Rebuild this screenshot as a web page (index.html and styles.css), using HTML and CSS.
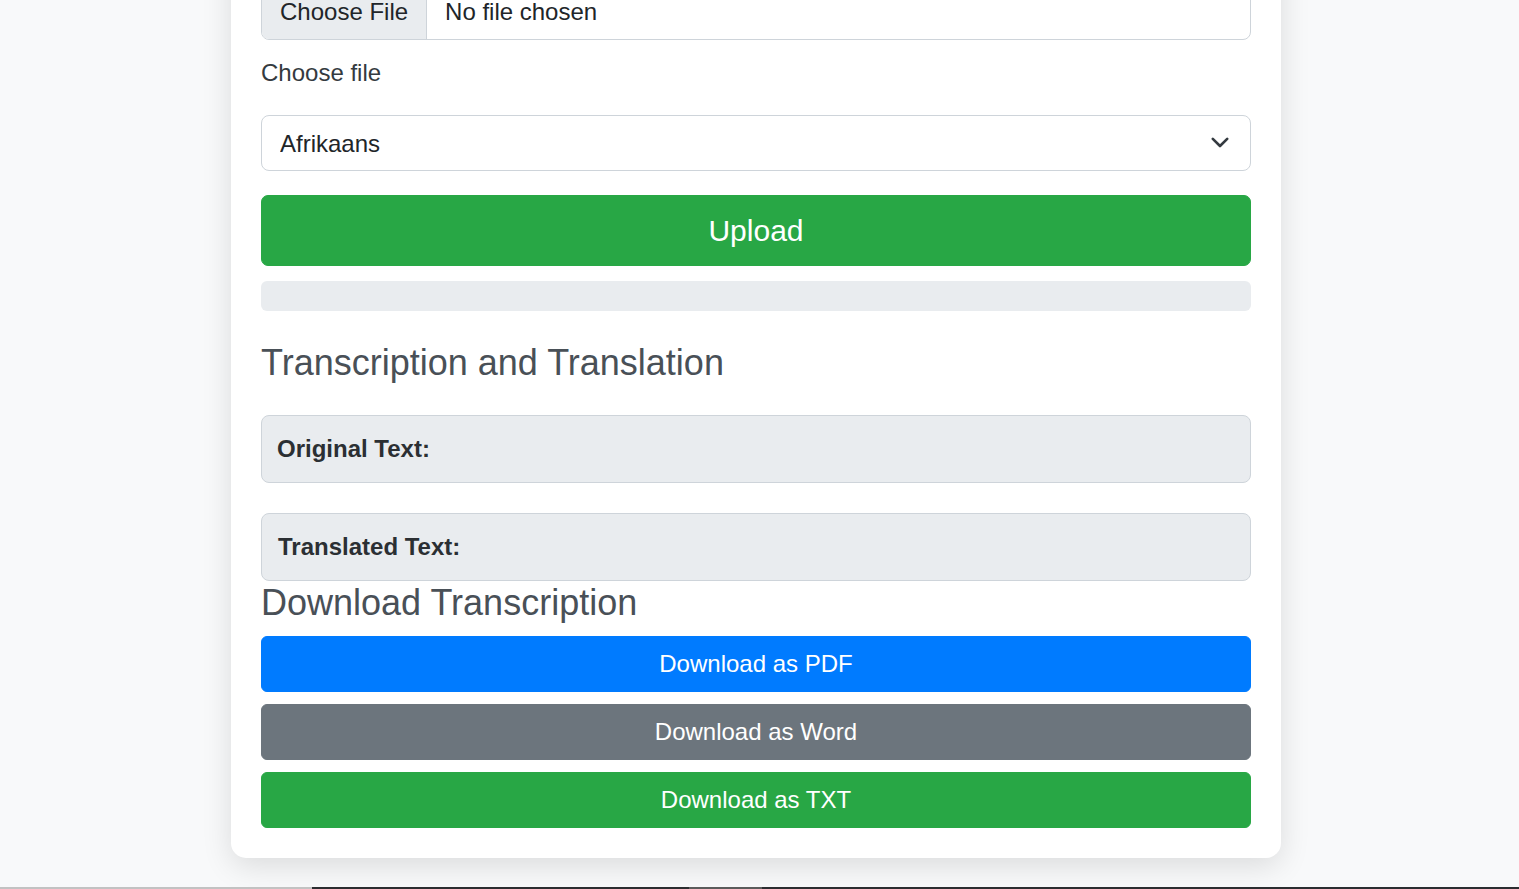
FILE: index.html
```html
<!DOCTYPE html>
<html lang="en">
<head>
<meta charset="utf-8">
<title>Transcription and Translation</title>
<link rel="stylesheet" href="styles.css">
</head>
<body>
<main class="page">
  <section class="card">
    <input type="file" class="file-input">
    <label class="file-label">Choose file</label>
    <div class="select-wrap">
      <select class="select">
        <option>Afrikaans</option>
      </select>
      <svg class="chevron" width="18" height="12" viewBox="0 0 18 12" aria-hidden="true">
        <path d="M1.8 1.8 L9 9 L16.2 1.8" fill="none" stroke="#343a40" stroke-width="2.6" stroke-linecap="round" stroke-linejoin="round"/>
      </svg>
    </div>
    <button class="btn btn-upload">Upload</button>
    <div class="progress"></div>
    <h4 class="heading heading-first">Transcription and Translation</h4>
    <div class="text-box"><strong>Original Text:</strong></div>
    <div class="text-box text-box-second"><strong>Translated Text:</strong></div>
    <h4 class="heading">Download Transcription</h4>
    <div class="downloads">
      <button class="btn btn-primary">Download as PDF</button>
      <button class="btn btn-secondary">Download as Word</button>
      <button class="btn btn-success">Download as TXT</button>
    </div>
  </section>
  <div class="strip">
    <span class="strip-a"></span>
    <span class="strip-b"></span>
    <span class="strip-c"></span>
    <span class="strip-d"></span>
  </div>
</main>
</body>
</html>
```
FILE: styles.css
```css
* {
  box-sizing: border-box;
}

html, body {
  margin: 0;
  padding: 0;
  background: #f8f9fa;
}

body {
  font-family: "Liberation Sans", Arial, sans-serif;
  font-size: 24px;
  line-height: 36px;
  color: #212529;
  overflow: hidden;
}

.page {
  display: flex;
  flex-direction: column;
}

.card {
  width: 1050px;
  margin-top: -47px;
  margin-left: calc(50% - 528.5px);
  background: #ffffff;
  border-radius: 15px;
  box-shadow: 0 8px 30px rgba(0, 0, 0, 0.12);
  padding: 30px;
  display: flex;
  flex-direction: column;
}

.file-input {
  display: block;
  width: 100%;
  height: 57px;
  padding: 0;
  border: 1px solid #ced4da;
  border-radius: 8px;
  background: #ffffff;
  font-family: inherit;
  font-size: 24px;
  color: #212529;
  overflow: hidden;
}

.file-input::file-selector-button {
  height: 55px;
  margin: 0 18px 0 0;
  padding: 0 18px;
  border: 0;
  border-right: 1px solid #ced4da;
  border-radius: 0;
  background: #e9ecef;
  font-family: inherit;
  font-size: 24px;
  color: #212529;
}

.file-label {
  display: block;
  margin-top: 15px;
  line-height: 36px;
  color: #343a40;
}

.select-wrap {
  position: relative;
  margin-top: 24px;
}

.select {
  display: block;
  width: 100%;
  height: 56px;
  padding: 0 18px;
  border: 1px solid #ced4da;
  border-radius: 8px;
  background: #ffffff;
  font-family: inherit;
  font-size: 24px;
  color: #212529;
  -webkit-appearance: none;
  appearance: none;
}

.chevron {
  position: absolute;
  right: 22px;
  top: 22px;
}

.btn {
  display: block;
  width: 100%;
  border: 1px solid transparent;
  border-radius: 6px;
  padding: 9px 18px;
  font-family: inherit;
  font-size: 24px;
  line-height: 36px;
  color: #ffffff;
  text-align: center;
  cursor: pointer;
}

.btn-upload {
  margin-top: 24px;
  padding: 12px 24px;
  font-size: 30px;
  line-height: 45px;
  border-radius: 7px;
  background: #28a745;
  border-color: #28a745;
}

.progress {
  margin-top: 15px;
  height: 30px;
  border-radius: 6px;
  background: #e9ecef;
}

.heading {
  margin: 0 0 12px;
  font-size: 36px;
  line-height: 43px;
  font-weight: 400;
  color: #495057;
}

.heading-first {
  margin-top: 30px;
  margin-bottom: 31px;
}

.text-box {
  padding: 15px;
  border: 1px solid #ced4da;
  border-radius: 8px;
  background: #e9ecef;
  line-height: 36px;
  color: #2b2f33;
}

.text-box-second {
  margin-top: 30px;
  padding-left: 16px;
}

.downloads {
  display: flex;
  flex-direction: column;
  gap: 12px;
}

.btn-primary {
  background: #007bff;
  border-color: #007bff;
}

.btn-secondary {
  background: #6c757d;
  border-color: #6c757d;
}

.btn-success {
  background: #28a745;
  border-color: #28a745;
}

.strip {
  display: flex;
  height: 2px;
  margin-top: 29px;
}

.strip-a {
  width: 312px;
  background: #c2c2c2;
}

.strip-b {
  width: 377px;
  background: #2b2d30;
}

.strip-c {
  width: 73px;
  background: #5b5b5b;
}

.strip-d {
  flex: 1;
  background: #2b2d30;
}
```
